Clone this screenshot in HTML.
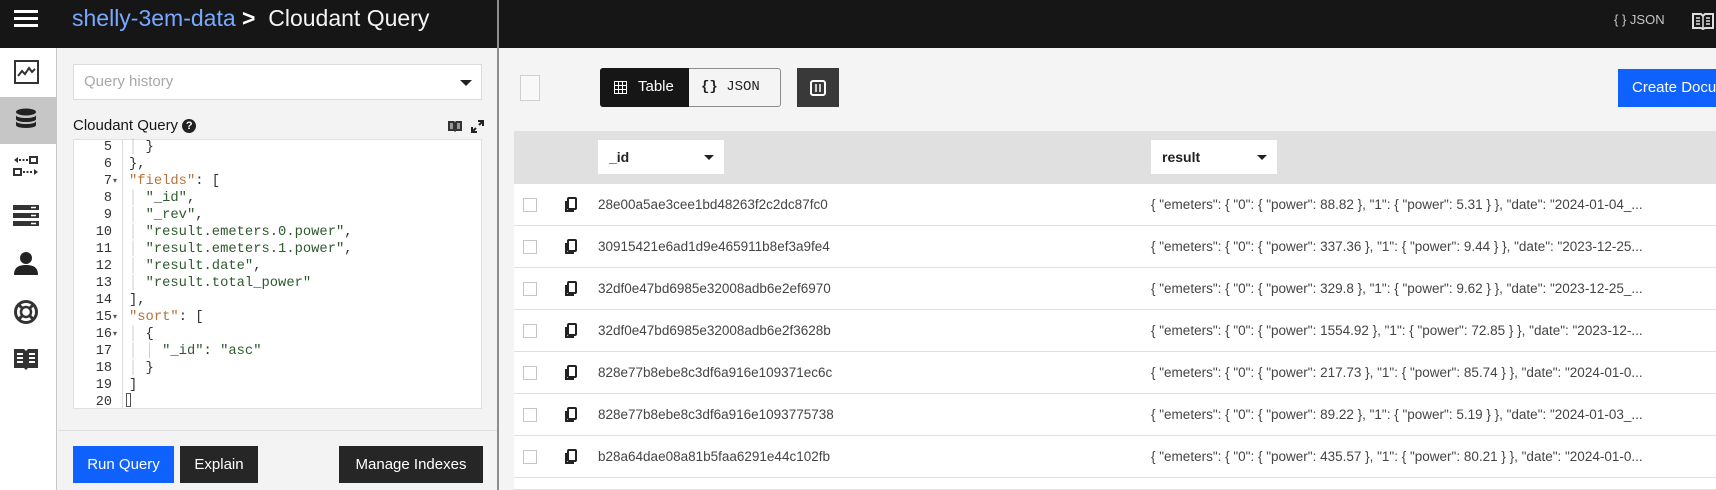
<!DOCTYPE html>
<html><head><meta charset="utf-8"><style>
*{box-sizing:border-box;margin:0;padding:0}
html,body{width:1716px;height:490px;overflow:hidden}
body{background:#f4f4f4;font-family:"Liberation Sans",sans-serif;position:relative}
.abs{position:absolute}
.top{left:0;top:0;width:1716px;height:48px;background:#161616}
.mono{font-family:"Liberation Mono",monospace}
.code div{height:17px;line-height:17px;white-space:pre}
.row{left:514px;width:1202px;height:42px;border-bottom:1px solid #e0e0e0;background:#fff}
.row .cb{position:absolute;left:9px;top:14px;width:14px;height:14px;border:1px solid #c6c6c6;background:#fff}
.row .t1{position:absolute;left:84px;top:13px;font-size:13.5px;color:#444}
.row .t2{position:absolute;left:637px;top:13px;font-size:13.5px;color:#444;white-space:nowrap}
.row svg{position:absolute;left:50px;top:13px}
.btn{color:#fff;font-size:15px;text-align:center;line-height:37px;height:37px}
</style></head><body>
<div class="abs top"></div>
<div class="abs" style="left:14px;top:10px;width:24px;height:3px;background:#fff"></div>
<div class="abs" style="left:14px;top:17px;width:24px;height:3px;background:#fff"></div>
<div class="abs" style="left:14px;top:24px;width:24px;height:3px;background:#fff"></div>
<div class="abs" style="left:72px;top:5px;font-size:23px;color:#78a9ff;white-space:nowrap">shelly-3em-data <span style="color:#fff;font-weight:bold">&gt;</span> <span style="color:#f4f4f4">&nbsp;Cloudant Query</span></div>
<div class="abs" style="left:497px;top:0;width:2px;height:490px;background:#8d8d8d"></div>
<div class="abs" style="left:1614px;top:12px;font-size:13px;color:#c6c6c6">{ } JSON</div>
<svg class="abs" style="left:1692px;top:12px" width="22" height="18" viewBox="0 0 22 18"><path d="M1 2h8l2 2 2-2h8v14h-8l-2 1-2-1H1z" fill="none" stroke="#ddd" stroke-width="2"/><path d="M11 4v12M4 6h4M4 9h4M4 12h4M14 6h4M14 9h4M14 12h4" stroke="#ddd" stroke-width="1.5"/></svg>

<!-- sidebar -->
<div class="abs" style="left:0;top:48px;width:57px;height:442px;background:#fff;border-right:1px solid #c6c6c6"></div>
<div class="abs" style="left:0;top:97px;width:57px;height:47px;background:#c6c6c6"></div>
<svg class="abs" style="left:14px;top:60px" width="25" height="24"><rect x="1" y="1" width="23" height="22" fill="none" stroke="#333" stroke-width="2"/><path d="M4 16l4-5 3 3 4-6 3 4 3-3" fill="none" stroke="#333" stroke-width="2"/></svg>
<svg class="abs" style="left:15px;top:108px" width="22" height="24"><ellipse cx="11" cy="4" rx="10" ry="3.5" fill="#222"/><path d="M1 7c0 4 20 4 20 0v4c0 4-20 4-20 0zM1 13c0 4 20 4 20 0v4c0 4-20 4-20 0z" fill="#222"/></svg>
<svg class="abs" style="left:13px;top:156px" width="26" height="22"><path d="M1 4l4-3v6z" fill="#333"/><path d="M6 4h9" stroke="#333" stroke-width="2" stroke-dasharray="2 1.5"/><rect x="17" y="1" width="7" height="6" fill="none" stroke="#333" stroke-width="2"/><rect x="1" y="13" width="7" height="6" fill="none" stroke="#333" stroke-width="2"/><path d="M10 16h9" stroke="#333" stroke-width="2" stroke-dasharray="2 1.5"/><path d="M25 16l-4-3v6z" fill="#333"/></svg>
<svg class="abs" style="left:13px;top:205px" width="26" height="22"><rect x="0" y="0" width="26" height="5" fill="#333"/><rect x="0" y="8" width="26" height="5" fill="#333"/><rect x="0" y="16" width="26" height="5" fill="#333"/><path d="M18 2.5h5M18 10.5h5M18 18.5h5" stroke="#fff" stroke-width="1.5"/></svg>
<svg class="abs" style="left:14px;top:251px" width="24" height="24"><circle cx="12" cy="7" r="6" fill="#222"/><path d="M0 24c0-8 5-10 12-10s12 2 12 10z" fill="#222"/></svg>
<svg class="abs" style="left:13px;top:299px" width="26" height="26"><circle cx="13" cy="13" r="10.5" fill="none" stroke="#333" stroke-width="3"/><circle cx="13" cy="13" r="5" fill="none" stroke="#333" stroke-width="2.5"/><path d="M5 5l5 5M21 5l-5 5M5 21l5-5M21 21l-5-5" stroke="#333" stroke-width="3"/></svg>
<svg class="abs" style="left:13px;top:347px" width="26" height="24"><path d="M1 2h10l2 2 2-2h10v19h-10l-2 2-2-2H1z" fill="#333"/><path d="M4 7h6M4 11h6M4 15h6M16 7h6M16 11h6M16 15h6" stroke="#fff" stroke-width="2"/></svg>

<!-- left panel -->
<div class="abs" style="left:58px;top:48px;width:439px;height:442px;background:#f3f3f3"></div>
<div class="abs" style="left:73px;top:64px;width:409px;height:36px;background:#fff;border:1px solid #dcdcdc"></div>
<div class="abs" style="left:84px;top:73px;font-size:15px;color:#a8a8a8">Query history</div>
<div class="abs" style="left:460px;top:80px;width:0;height:0;border-left:6px solid transparent;border-right:6px solid transparent;border-top:6px solid #222"></div>
<div class="abs" style="left:73px;top:117px;font-size:15px;color:#161616">Cloudant Query <span style="display:inline-block;width:14px;height:14px;border-radius:7px;background:#222;color:#fff;font-size:11px;text-align:center;line-height:14px;font-weight:bold;vertical-align:1px">?</span></div>
<svg class="abs" style="left:448px;top:120px" width="14" height="12"><path d="M0 1h6l1 1 1-1h6v10H8l-1 1-1-1H0z" fill="#333"/><path d="M2 4h3M2 6h3M2 8h3M9 4h3M9 6h3M9 8h3" stroke="#fff" stroke-width="1"/></svg>
<svg class="abs" style="left:471px;top:120px" width="13" height="13"><path d="M7 1h5v5M12 1L8 5M6 12H1V7M1 12l4-4" fill="none" stroke="#222" stroke-width="2"/></svg>
<div class="abs" style="left:73px;top:139px;width:409px;height:270px;background:#fff;border:1px solid #e0e0e0"></div>
<div class="abs" style="left:122px;top:140px;width:1px;height:268px;background:#ddd"></div>
<div class="abs mono code" style="left:76px;top:139px;width:36px;font-size:13.5px;color:#333;text-align:right">
<div>5</div><div>6</div><div>7</div><div>8</div><div>9</div><div>10</div><div>11</div><div>12</div><div>13</div><div>14</div><div>15</div><div>16</div><div>17</div><div>18</div><div>19</div><div>20</div></div>
<div class="abs mono" style="left:113px;top:176px;font-size:8px;color:#555">▾</div>
<div class="abs mono" style="left:113px;top:312px;font-size:8px;color:#555">▾</div>
<div class="abs mono" style="left:113px;top:329px;font-size:8px;color:#555">▾</div>
<div class="abs mono code" style="left:129px;top:139px;font-size:13.8px;color:#333">
<div><span style="color:#ccc">│</span> }</div><div>},</div><div><span style="color:#b5733a">"fields"</span>: [</div><div><span style="color:#ccc">│</span> <span style="color:#2e5a2e">"_id"</span>,</div><div><span style="color:#ccc">│</span> <span style="color:#2e5a2e">"_rev"</span>,</div><div><span style="color:#ccc">│</span> <span style="color:#2e5a2e">"result.emeters.0.power"</span>,</div><div><span style="color:#ccc">│</span> <span style="color:#2e5a2e">"result.emeters.1.power"</span>,</div><div><span style="color:#ccc">│</span> <span style="color:#2e5a2e">"result.date"</span>,</div><div><span style="color:#ccc">│</span> <span style="color:#2e5a2e">"result.total_power"</span></div><div>],</div><div><span style="color:#b5733a">"sort"</span>: [</div><div><span style="color:#ccc">│</span> {</div><div><span style="color:#ccc">│ │</span> <span style="color:#2e5a2e">"_id"</span>: <span style="color:#2e5a2e">"asc"</span></div><div><span style="color:#ccc">│</span> }</div><div>]</div></div>
<div class="abs" style="left:126px;top:393px;width:5px;height:14px;border:1px solid #555"></div>
<div class="abs" style="left:58px;top:430px;width:439px;height:1px;background:#ddd"></div>
<div class="abs btn" style="left:73px;top:446px;width:101px;background:#0f62fe">Run Query</div>
<div class="abs btn" style="left:180px;top:446px;width:78px;background:#262626">Explain</div>
<div class="abs btn" style="left:339px;top:446px;width:144px;background:#262626">Manage Indexes</div>

<!-- right -->
<div class="abs" style="left:520px;top:75px;width:20px;height:26px;border:1px solid #d0d0d0;background:#f8f8f8"></div>
<div class="abs" style="left:600px;top:68px;width:181px;height:39px;border:1px solid #8d8d8d;border-radius:3px;background:#f4f4f4"></div>
<div class="abs" style="left:600px;top:68px;width:89px;height:39px;background:#161616;border-radius:3px 0 0 3px"></div>
<svg class="abs" style="left:614px;top:81px" width="13" height="13"><rect x="0.5" y="0.5" width="12" height="12" fill="none" stroke="#fff"/><path d="M0 4.5h13M0 8.5h13M4.5 0v13M8.5 0v13" stroke="#fff"/></svg>
<div class="abs" style="left:638px;top:78px;font-size:15px;color:#fff">Table</div>
<div class="abs mono" style="left:701px;top:79px;font-size:14px;color:#222"><b>{}</b> JSON</div>
<div class="abs" style="left:797px;top:68px;width:42px;height:39px;background:#393939"></div>
<svg class="abs" style="left:810px;top:80px" width="16" height="16"><rect x="1" y="1" width="14" height="14" rx="2" fill="none" stroke="#fff" stroke-width="2"/><path d="M6 4v8M10 4v8" stroke="#fff" stroke-width="1.5"/></svg>
<div class="abs btn" style="left:1618px;top:69px;width:110px;height:38px;background:#0f62fe;text-align:left;padding-left:14px;white-space:nowrap">Create Document</div>
<div class="abs" style="left:514px;top:131px;width:1202px;height:53px;background:#e0e0e0"></div>
<div class="abs" style="left:598px;top:140px;width:126px;height:34px;background:#fff"></div>
<div class="abs" style="left:609px;top:149px;font-size:14px;font-weight:bold;color:#222">_id</div>
<div class="abs" style="left:704px;top:155px;border-left:5px solid transparent;border-right:5px solid transparent;border-top:5px solid #222"></div>
<div class="abs" style="left:1151px;top:140px;width:126px;height:34px;background:#fff"></div>
<div class="abs" style="left:1162px;top:149px;font-size:14px;font-weight:bold;color:#222">result</div>
<div class="abs" style="left:1257px;top:155px;border-left:5px solid transparent;border-right:5px solid transparent;border-top:5px solid #222"></div>

<div class="abs row" style="top:184px"><div class="cb"></div><svg width="14" height="16"><rect x="4" y="1" width="8" height="11" rx="1" fill="none" stroke="#222" stroke-width="2"/><path d="M2 4v10h8" fill="none" stroke="#222" stroke-width="2"/></svg><div class="t1">28e00a5ae3cee1bd48263f2c2dc87fc0</div><div class="t2">{ "emeters": { "0": { "power": 88.82 }, "1": { "power": 5.31 } }, "date": "2024-01-04_...</div></div>
<div class="abs row" style="top:226px"><div class="cb"></div><svg width="14" height="16"><rect x="4" y="1" width="8" height="11" rx="1" fill="none" stroke="#222" stroke-width="2"/><path d="M2 4v10h8" fill="none" stroke="#222" stroke-width="2"/></svg><div class="t1">30915421e6ad1d9e465911b8ef3a9fe4</div><div class="t2">{ "emeters": { "0": { "power": 337.36 }, "1": { "power": 9.44 } }, "date": "2023-12-25...</div></div>
<div class="abs row" style="top:268px"><div class="cb"></div><svg width="14" height="16"><rect x="4" y="1" width="8" height="11" rx="1" fill="none" stroke="#222" stroke-width="2"/><path d="M2 4v10h8" fill="none" stroke="#222" stroke-width="2"/></svg><div class="t1">32df0e47bd6985e32008adb6e2ef6970</div><div class="t2">{ "emeters": { "0": { "power": 329.8 }, "1": { "power": 9.62 } }, "date": "2023-12-25_...</div></div>
<div class="abs row" style="top:310px"><div class="cb"></div><svg width="14" height="16"><rect x="4" y="1" width="8" height="11" rx="1" fill="none" stroke="#222" stroke-width="2"/><path d="M2 4v10h8" fill="none" stroke="#222" stroke-width="2"/></svg><div class="t1">32df0e47bd6985e32008adb6e2f3628b</div><div class="t2">{ "emeters": { "0": { "power": 1554.92 }, "1": { "power": 72.85 } }, "date": "2023-12-...</div></div>
<div class="abs row" style="top:352px"><div class="cb"></div><svg width="14" height="16"><rect x="4" y="1" width="8" height="11" rx="1" fill="none" stroke="#222" stroke-width="2"/><path d="M2 4v10h8" fill="none" stroke="#222" stroke-width="2"/></svg><div class="t1">828e77b8ebe8c3df6a916e109371ec6c</div><div class="t2">{ "emeters": { "0": { "power": 217.73 }, "1": { "power": 85.74 } }, "date": "2024-01-0...</div></div>
<div class="abs row" style="top:394px"><div class="cb"></div><svg width="14" height="16"><rect x="4" y="1" width="8" height="11" rx="1" fill="none" stroke="#222" stroke-width="2"/><path d="M2 4v10h8" fill="none" stroke="#222" stroke-width="2"/></svg><div class="t1">828e77b8ebe8c3df6a916e1093775738</div><div class="t2">{ "emeters": { "0": { "power": 89.22 }, "1": { "power": 5.19 } }, "date": "2024-01-03_...</div></div>
<div class="abs row" style="top:436px"><div class="cb"></div><svg width="14" height="16"><rect x="4" y="1" width="8" height="11" rx="1" fill="none" stroke="#222" stroke-width="2"/><path d="M2 4v10h8" fill="none" stroke="#222" stroke-width="2"/></svg><div class="t1">b28a64dae08a81b5faa6291e44c102fb</div><div class="t2">{ "emeters": { "0": { "power": 435.57 }, "1": { "power": 80.21 } }, "date": "2024-01-0...</div></div>
<div class="abs row" style="top:478px;height:12px"></div>
</body></html>
